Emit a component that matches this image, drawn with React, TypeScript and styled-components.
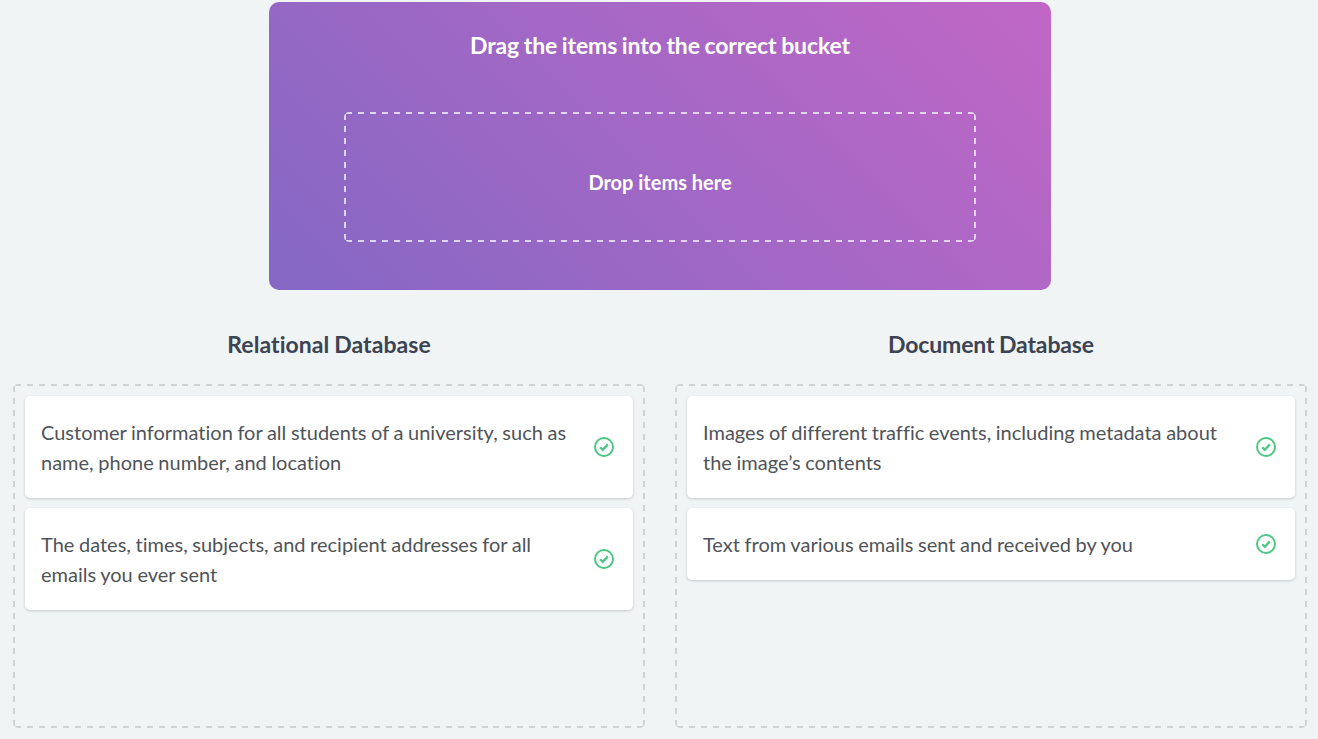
import React from 'react';
import styled, { createGlobalStyle } from 'styled-components';

const Global = createGlobalStyle`
  * { box-sizing: border-box; }
  body { margin: 0; background: #f0f4f5; font-family: Lato, sans-serif; overflow: hidden; }
`;
const Page = styled.main`
  height: 739px;
  padding: 2px 11px 0 13px;
  color: #3c4352;
`;
const Bank = styled.section`
  width: 782px;
  height: 288px;
  margin: 0 0 0 256px;
  padding: 25px 75px 0;
  border-radius: 10px;
  background: linear-gradient(45deg, #8468c4, #c167c6);
  color: #fff;
`;
const Title = styled.h2<{ $tracking: number }>`
  margin: 0;
  font-size: 23px;
  line-height: 36px;
  font-weight: 700;
  letter-spacing: ${(p) => p.$tracking}px;
  word-spacing: -0.8px;
  text-align: center;
`;
const Dashed = styled.div<{ $color: string; $step: number }>`
  --h: repeating-linear-gradient(90deg, ${(p) => p.$color} 0 6px, transparent 6px 11.962px);
  --v: repeating-linear-gradient(180deg, ${(p) => p.$color} 0 6px, transparent 6px ${(p) => p.$step}px);
  background-image: var(--h), var(--h), var(--v), var(--v);
  background-repeat: no-repeat;
  background-size: calc(100% - 4px) 2px, calc(100% - 4px) 2px, 2px calc(100% - 4px), 2px calc(100% - 4px);
  background-position: 2px 0, 2px 100%, 0 2px, 100% 2px;
  border-radius: 5px;
`;
const DropArea = styled(Dashed)`
  display: flex;
  align-items: center;
  justify-content: center;
  height: 130px;
  margin-top: 49px;
  padding-top: 10px;
  font-size: 20px;
  font-weight: 700;
`;
const Buckets = styled.div`
  display: grid;
  grid-template-columns: 632px 632px;
  column-gap: 30px;
  margin-top: 36px;
`;
const Bucket = styled.section``;
const BucketArea = styled(Dashed)`
  display: flex;
  flex-direction: column;
  gap: 10px;
  height: 344px;
  margin-top: 22px;
  padding: 12px;
`;
const Card = styled.article`
  display: flex;
  align-items: center;
  justify-content: space-between;
  width: 608px;
  padding: 21px 18px 21px 16px;
  border-radius: 5px;
  background: #fff;
  box-shadow: 0 1px 3px rgba(0, 0, 0, 0.18);
`;
const CardText = styled.p`
  width: 535px;
  margin: 0;
  color: #505458;
  font-size: 20px;
  line-height: 30px;
  white-space: pre-line;
  word-spacing: -0.5px;
  font-variant-ligatures: none;
`;
const CheckIcon = () => (
  <svg width="22" height="22" viewBox="0 0 22 22" fill="none" stroke="#4bc884" strokeWidth="2">
    <circle cx="11" cy="11" r="9" />
    <path d="M7.2 11.2l2.6 2.6 5-5.4" strokeWidth="2.3" />
  </svg>
);
const buckets = [
  {
    name: 'Relational Database',
    tracking: 0.06,
    items: [
      'Customer information for all students of a university, such as\nname, phone number, and location',
      'The dates, times, subjects, and recipient addresses for all\nemails you ever sent',
    ],
  },
  {
    name: 'Document Database',
    tracking: -0.15,
    items: [
      'Images of different traffic events, including metadata about\nthe image’s contents',
      'Text from various emails sent and received by you',
    ],
  },
];

export default function App() {
  return (
    <Page>
      <Global />
      <Bank>
        <Title $tracking={-0.12}>Drag the items into the correct bucket</Title>
        <DropArea $color="rgba(240, 240, 250, 0.8)" $step={12}>Drop items here</DropArea>
      </Bank>
      <Buckets>
        {buckets.map((bucket) => (
          <Bucket key={bucket.name}>
            <Title $tracking={bucket.tracking}>{bucket.name}</Title>
            <BucketArea $color="#d0d3d4" $step={11.93}>
              {bucket.items.map((item) => (
                <Card key={item}>
                  <CardText>{item}</CardText>
                  <CheckIcon />
                </Card>
              ))}
            </BucketArea>
          </Bucket>
        ))}
      </Buckets>
    </Page>
  );
}
